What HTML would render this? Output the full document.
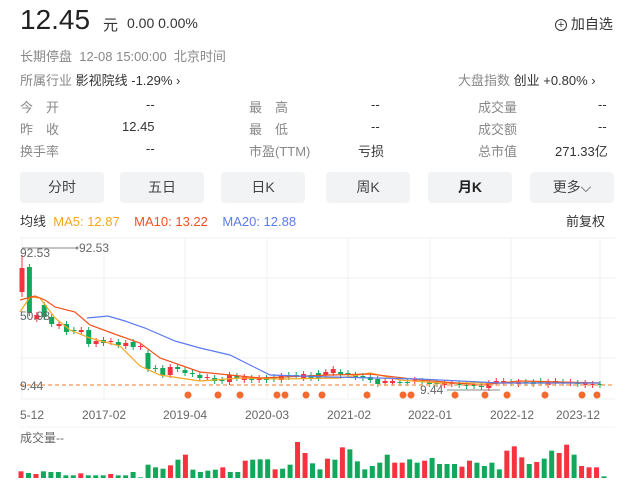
<!DOCTYPE html>
<html><head><meta charset="utf-8"><style>
body{margin:0;width:632px;height:495px;background:#fff;font-family:"Liberation Sans","Noto Sans CJK SC",sans-serif;color:#333;position:relative;overflow:hidden}
.a{position:absolute;white-space:nowrap}
.g{color:#888}
.btn{position:absolute;top:172px;height:31px;width:84px;background:#f2f3f5;border-radius:4px;text-align:center;line-height:31px;font-size:14px;color:#444}
</style></head><body>
<div class="a" style="left:20px;top:4px;font-size:28px;color:#222">12.45</div>
<div class="a" style="left:103px;top:14px;font-size:15px">元</div>
<div class="a" style="left:127px;top:15px;font-size:14px">0.00 0.00%</div>
<div class="a" style="left:555px;top:14px;font-size:14px"><span style="display:inline-block;width:10px;height:10px;border:1px solid #333;border-radius:50%;font-size:11px;line-height:10px;text-align:center;vertical-align:1px">+</span> 加自选</div>
<div class="a g" style="left:20px;top:46px;font-size:13px">长期停盘 &nbsp;12-08 15:00:00 &nbsp;北京时间</div>
<div class="a" style="left:20px;top:70px;font-size:13px"><span class="g">所属行业</span> 影视院线 -1.29% ›</div>
<div class="a" style="left:458px;top:70px;font-size:13px"><span class="g">大盘指数</span> 创业 +0.80% ›</div>
<div style="font-size:13px">
<div class="a g" style="left:20px;top:97px">今　开</div><div class="a" style="left:146px;top:97px">--</div>
<div class="a g" style="left:20px;top:119px">昨　收</div><div class="a" style="left:122px;top:119px">12.45</div>
<div class="a g" style="left:20px;top:141px">换手率</div><div class="a" style="left:146px;top:141px">--</div>
<div class="a g" style="left:249px;top:97px">最　高</div><div class="a" style="left:371px;top:97px">--</div>
<div class="a g" style="left:249px;top:119px">最　低</div><div class="a" style="left:371px;top:119px">--</div>
<div class="a g" style="left:249px;top:141px">市盈(TTM)</div><div class="a" style="left:358px;top:141px">亏损</div>
<div class="a g" style="left:478px;top:97px">成交量</div><div class="a" style="left:598px;top:97px">--</div>
<div class="a g" style="left:478px;top:119px">成交额</div><div class="a" style="left:598px;top:119px">--</div>
<div class="a g" style="left:478px;top:141px">总市值</div><div class="a" style="left:555px;top:141px">271.33亿</div>
</div>
<div class="btn" style="left:20px">分时</div>
<div class="btn" style="left:120px">五日</div>
<div class="btn" style="left:221px">日K</div>
<div class="btn" style="left:326px">周K</div>
<div class="btn" style="left:428px;font-weight:bold;color:#222">月K</div>
<div class="btn" style="left:530px">更多⌵</div>
<div class="a" style="left:20px;top:211px;font-size:13px">均线 <span style="color:#f5a623">&nbsp;MA5: 12.87</span><span style="color:#f4511e">&nbsp;&nbsp;&nbsp;&nbsp;MA10: 13.22</span><span style="color:#5b7bf0">&nbsp;&nbsp;&nbsp;&nbsp;MA20: 12.88</span></div>
<div class="a" style="left:566px;top:211px;font-size:13px">前复权</div>
<svg class="a" style="left:0;top:0" width="632" height="495" id="s" font-family="Liberation Sans, sans-serif">
</svg>
<script>
var s=document.getElementById('s'),h='';
[238,278,318,358,399].forEach(y=>h+=`<line x1="20" x2="615" y1="${y}" y2="${y}" stroke="#f2f2f2"/>`);
[22,104,185,267,348,430,511,600].forEach(x=>h+=`<line x1="${x}" x2="${x}" y1="238" y2="399" stroke="#f2f2f2"/>`);
h+=`<line x1="20" x2="615" y1="427" y2="427" stroke="#f4f4f4"/>`;
var c=[[268,292,'r'],[267,313,'g'],[315,319,'r'],[305,317,'g'],[317,324,'g'],[324,326,'r'],[324,332,'g'],[330,331,'g'],[330,332,'r'],[330,344,'g'],[341,344,'r'],[340,343,'g'],[341,342,'r'],[342,345,'g'],[343,346,'r'],[342,347,'g'],[346,347,'r'],[353,369,'g'],[368,369,'g'],[368,375,'g'],[367,375,'r'],[367,369,'g'],[370,373,'g'],[373,374,'g'],[375,378,'g'],[377,378,'r'],[378,381,'g'],[380,381,'g'],[375,382,'r'],[376,378,'g'],[377,380,'r'],[378,380,'g'],[378,380,'r'],[378,380,'g'],[377,379,'g'],[376,380,'r'],[375,377,'g'],[375,376,'g'],[374,378,'r'],[375,378,'g'],[373,378,'g'],[372,375,'r'],[369,373,'r'],[372,374,'g'],[373,374,'g'],[375,377,'g'],[376,378,'g'],[377,380,'g'],[379,384,'g'],[381,383,'r'],[381,383,'r'],[382,383,'g'],[382,383,'g'],[380,381,'r'],[381,382,'g'],[382,384,'g'],[383,384,'g'],[383,385,'r'],[383,384,'r'],[384,385,'g'],[385,386,'g'],[384,386,'g'],[386,387,'g'],[383,388,'r'],[381,383,'r'],[381,383,'r'],[382,383,'g'],[382,384,'r'],[382,383,'g'],[382,384,'g'],[381,383,'g'],[382,385,'r'],[381,383,'r'],[382,383,'g'],[382,383,'r'],[383,384,'g'],[383,385,'r'],[384,385,'r'],[384,385,'g']];
var R='#f5333f',G='#12a85b',sp=(600-22)/78;
c.forEach((d,i)=>{var x=22+i*sp,col=d[2]=='r'?R:G,t=d[0]-3,b=d[1]+3;if(i==0){t=255;b=297}
h+=`<line x1="${x}" x2="${x}" y1="${t}" y2="${b}" stroke="${col}"/><rect x="${x-2.5}" y="${d[0]}" width="5" height="${Math.max(1,d[1]-d[0])}" fill="${col}"/>`});
function pl(p,col){h+=`<polyline fill="none" stroke="${col}" stroke-width="1.2" points="${p}"/>`}
pl('20,312 30,297 40,298 55,318 70,330 90,338 120,346 140,366 160,375 200,381 240,378 280,379 340,378 370,373 400,380 440,383 480,383 520,383 600,383','#f5a623');
pl('20,300 35,296 45,300 55,307 75,312 90,325 120,336 140,343 160,358 200,372 260,378 330,375 370,374 420,380 480,385 520,381 600,383','#f4511e');
pl('87,318 108,316 125,321 145,328 175,341 200,348 230,355 270,375 330,377 420,379 500,383 600,383','#5b7bf0');
h+=`<line x1="20" x2="615" y1="385" y2="385" stroke="#f9a56b" stroke-width="1.5" stroke-dasharray="4,3"/>`;
[188,218,240,277,285,306,322,367,403,411,455,485,507,545,582,597].forEach(x=>h+=`<circle cx="${x}" cy="395" r="3.5" fill="#f56a2f"/>`);
h+=`<line x1="22" x2="77" y1="248" y2="248" stroke="#888"/><circle cx="77" cy="248" r="1.5" fill="#888"/>`;
h+=`<text x="79" y="252" font-size="12" fill="#666">92.53</text><text x="20" y="257" font-size="12" fill="#666">92.53</text>`;
h+=`<text x="20" y="320" font-size="12" fill="#666">50.98</text><text x="20" y="390" font-size="12" fill="#666">9.44</text>`;
h+=`<line x1="447" x2="500" y1="390" y2="390" stroke="#888"/><text x="420" y="394" font-size="12" fill="#666">9.44</text>`;
[['5-12',20],['2017-02',82],['2019-04',163],['2020-03',245],['2021-02',327],['2022-01',408],['2022-12',490],['2023-12',556]].forEach(l=>h+=`<text x="${l[1]}" y="419" font-size="12" fill="#666">${l[0]}</text>`);
h+=`<text x="20" y="442" font-size="12" fill="#666" font-family="Liberation Sans, Noto Sans CJK SC, sans-serif">成交量--</text>`;
var v='20r,15g,12r,20g,18g,18g,8g,8g,14r,8g,8g,8g,12r,8g,8g,18g,2g,40g,32g,28g,38r,55g,70r,25g,18g,22g,25g,32r,18g,18g,52r,55g,56g,56g,26r,28g,40g,108r,75r,44g,26g,58r,55g,92r,86g,50g,26g,36g,46g,70g,46r,46r,56g,46g,52r,60g,42g,42g,42g,34r,52r,46g,36g,46g,26g,82r,95r,62r,42g,48r,58g,82g,75r,100r,70g,36r,32r,32r,5g'.split(',');
var vs=(604-21)/(v.length-1);
v.forEach((d,i)=>{var hh=parseInt(d)/3,col=d.slice(-1)=='r'?R:G;h+=`<rect x="${21+i*vs-2.5}" y="${478-hh}" width="5" height="${hh}" fill="${col}"/>`});
s.innerHTML=h;
</script>
</body></html>
